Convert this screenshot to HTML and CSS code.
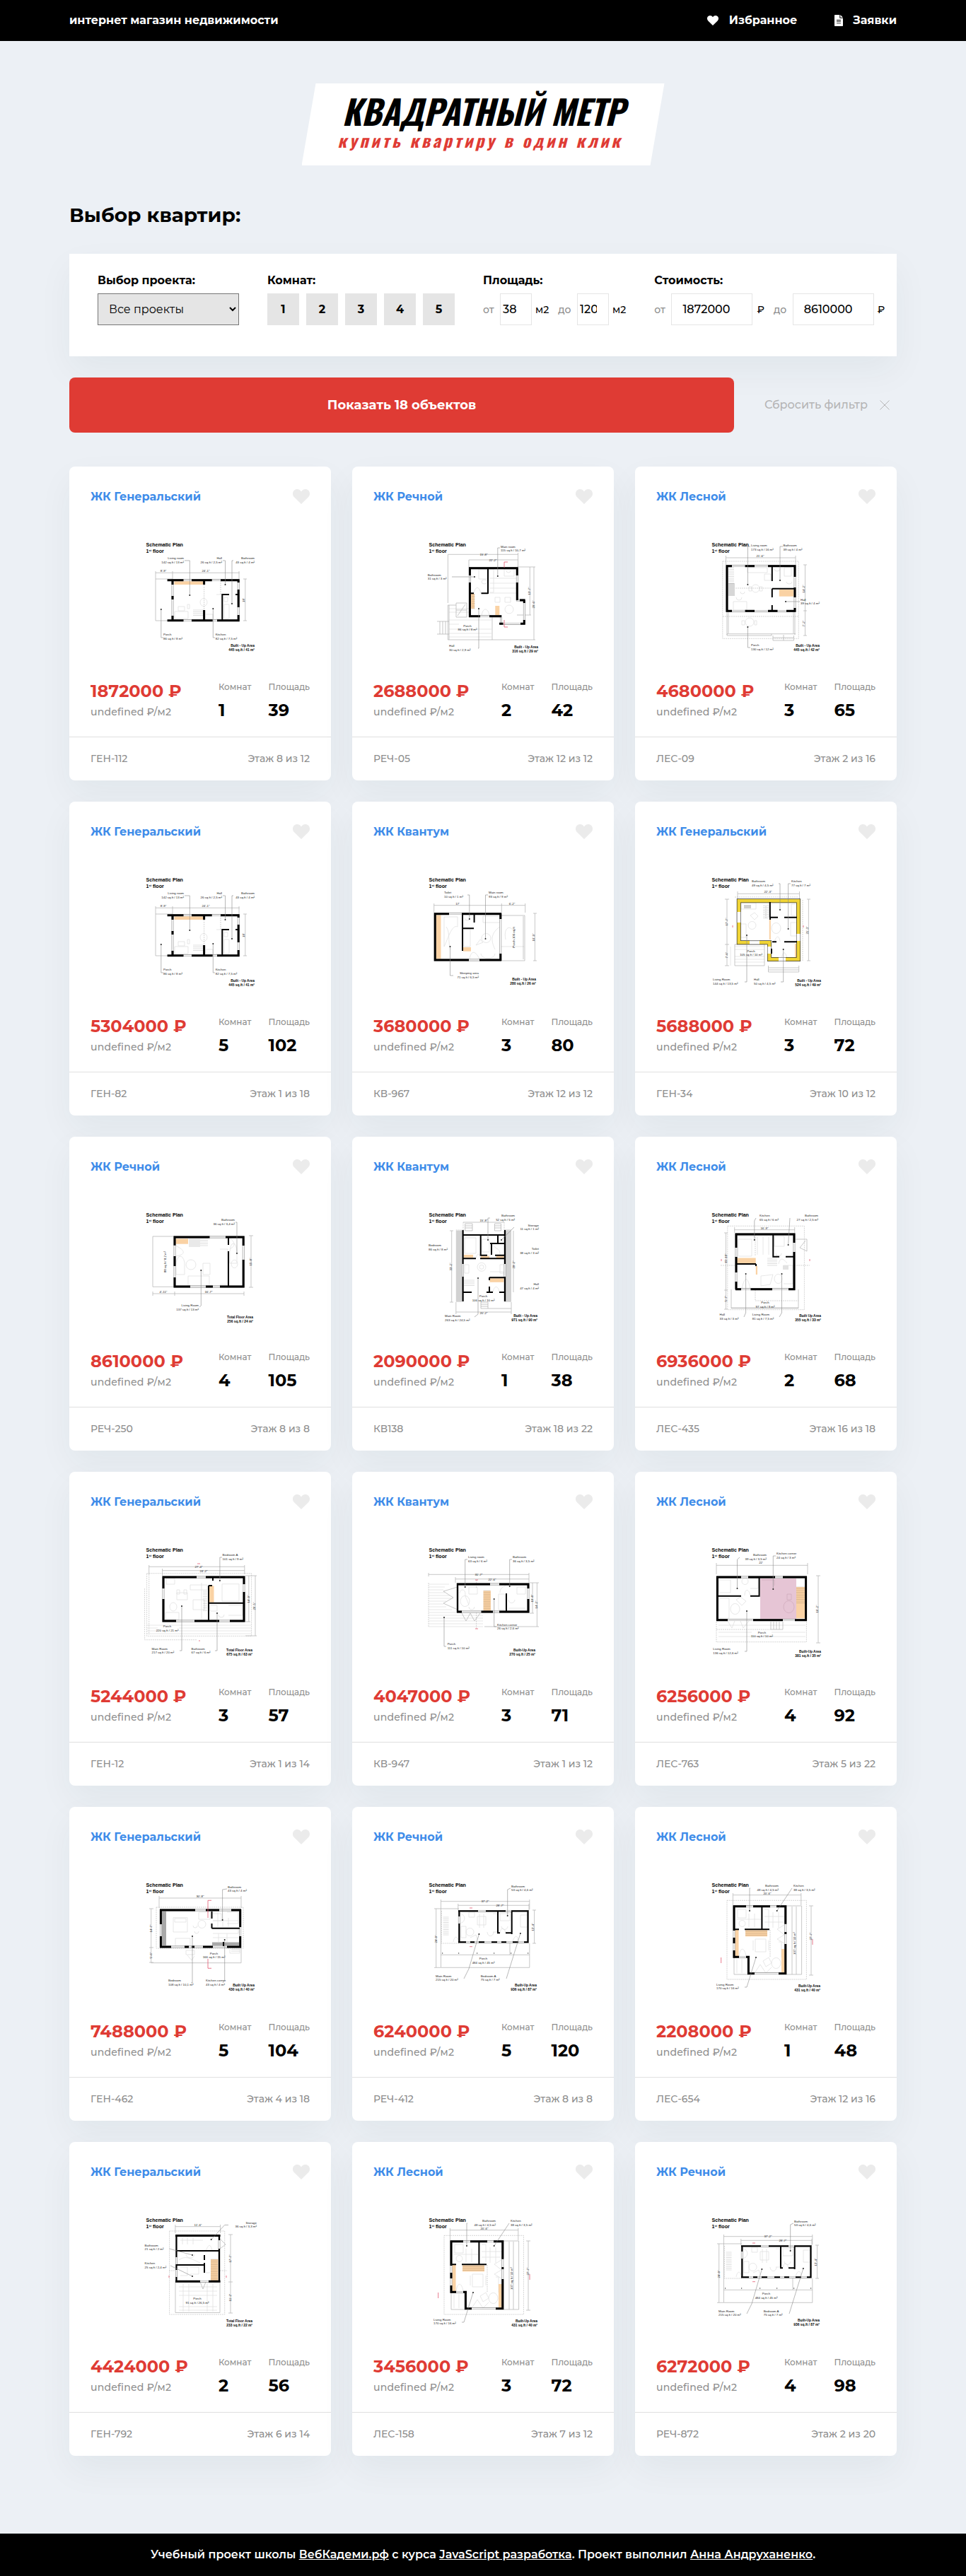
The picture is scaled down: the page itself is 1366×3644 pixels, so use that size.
FILE: index.html
```html
<!DOCTYPE html>
<html lang="ru">
<head>
<meta charset="utf-8">
<title>Квадратный метр</title>
<link rel="stylesheet" href="styles.css">
</head>
<body>
<header class="topbar">
  <div class="container topbar__row">
    <span>интернет магазин недвижимости</span>
    <nav class="topbar__nav">
      <a class="topbar__link" href="#">
        <svg class="topbar__heart" viewBox="0 0 24 21"><path d="M12 21 2 11.3C-1 8 -.4 3.4 2.2 1.4 5.400-1 9.700-.2 12 3.400 14.300-.2 18.600-1 21.800 1.400 24.400 3.400 25 8 22 11.300Z"/></svg>
        Избранное
      </a>
      <a class="topbar__link" href="#">
        <svg class="topbar__doc" viewBox="0 0 12 16"><path fill-rule="evenodd" d="M.8 0H7.300V4.700H12V15.200a.8.8 0 0 1-.8.8H.8A.8.8 0 0 1 0 15.200V.8A.8.8 0 0 1 .8 0ZM8.300 0 12 3.800H8.300ZM3 7v.9h6V7ZM3 9.200v.9h6v-.9ZM3 11.400v.9h6v-.9Z"/></svg>
        Заявки
      </a>
    </nav>
  </div>
</header>

<main class="container">
  <div class="logo">
    <div class="logo__title">КВАДРАТНЫЙ МЕТР</div>
    <div class="logo__sub">купить квартиру в один клик</div>
  </div>

  <h1 class="heading">Выбор квартир:</h1>

  <form class="filter">
    <div class="filter__group filter__group--project">
      <div class="filter__label">Выбор проекта:</div>
      <select class="filter__select"><option>Все проекты</option></select>
    </div>
    <div class="filter__group">
      <div class="filter__label">Комнат:</div>
      <div class="rooms"><span class="rooms__item">1</span><span class="rooms__item">2</span><span class="rooms__item">3</span><span class="rooms__item">4</span><span class="rooms__item">5</span></div>
    </div>
    <div class="filter__group">
      <div class="filter__label">Площадь:</div>
      <div class="range">
        <span class="range__word">от</span><span class="range__box"><span class="range__value">38</span></span><span class="range__unit">м2</span>
        <span class="range__word">до</span><span class="range__box"><span class="range__value">120</span></span><span class="range__unit range__unit--last">м2</span>
      </div>
    </div>
    <div class="filter__group">
      <div class="filter__label">Стоимость:</div>
      <div class="range">
        <span class="range__word">от</span><span class="range__box range__box--wide">1872000</span><span class="range__unit range__unit--money">₽</span>
        <span class="range__word">до</span><span class="range__box range__box--wide">8610000</span><span class="range__unit range__unit--last">₽</span>
      </div>
    </div>
  </form>

  <div class="actions">
    <button class="actions__show" type="button">Показать 18 объектов</button>
    <a class="actions__reset" href="#">Сбросить фильтр
      <svg class="actions__cross" viewBox="0 0 14 14"><path d="M.5.5l13 13M13.500.5l-13 13"/></svg>
    </a>
  </div>

  <section class="cards" id="cards"></section>
</main>

<footer class="footer">Учебный проект школы&nbsp;<a href="#">ВебКадеми.рф</a>&nbsp;с курса&nbsp;<a href="#">JavaScript разработка</a>. Проект выполнил&nbsp;<a href="#">Анна Андруханенко</a>.</footer>

<script src="script.js"></script>
</body>
</html>
```
FILE: styles.css
```css
* { box-sizing: border-box; }

body {
  margin: 0;
  background: #ecf0f5;
  color: #000;
  font: 500 16px/20px Montserrat, "Open Sans", sans-serif;
}

a { color: inherit; }

.container { width: 1170px; margin: 0 auto; }

.topbar { background: #000; color: #fff; font-weight: 700; }
.topbar__row { display: flex; justify-content: space-between; align-items: center; height: 58px; }
.topbar__nav { display: flex; gap: 53px; }
.topbar__link { display: flex; align-items: center; text-decoration: none; }
.topbar svg { fill: #fff; }
.topbar__heart { width: 16px; height: 14px; margin-right: 15px; }
.topbar__doc { width: 12px; height: 16px; margin-right: 14px; }

.logo {
  width: 513px;
  height: 116px;
  margin: 60px auto 53px;
  padding: 15px 0 0 57px;
  background: #fff;
  clip-path: polygon(20px 0, 100% 0, 493px 100%, 0 100%);
  font-family: Oswald, "Roboto Condensed", sans-serif;
  font-style: italic;
  font-weight: 700;
  white-space: nowrap;
}
.logo__title { font-size: 48px; line-height: 48px; }
.logo__sub { margin: 5px 0 0 -6px; color: #df3b34; font-size: 24px; line-height: 24px; letter-spacing: 3.840px; }

.heading { margin: 0 0 38px; font-size: 28px; line-height: 34px; font-weight: 700; }

.filter {
  display: flex;
  gap: 40px;
  height: 145px;
  padding: 28px 0 0 40px;
  background: #fff;
  box-shadow: 0 20px 50px rgba(0, 60, 50, .05);
}
.filter__group--project { width: 200px; }
.filter__label { margin-bottom: 8px; font-weight: 700; }
.filter__select {
  width: 200px;
  height: 45px;
  padding: 0 0 0 11px;
  border: 1px solid #767676;
  border-radius: 0;
  background-color: #e5e5e5;
  color: #000;
  font: 400 16px Montserrat, "Open Sans", sans-serif;
}

.rooms { display: flex; gap: 10px; }
.rooms__item { width: 45px; background: #e5e5e5; font-weight: 700; line-height: 45px; text-align: center; }

.range { display: flex; align-items: center; height: 45px; font-size: 14px; }
.range__word { margin-right: 8.500px; color: #8e8e8e; }
.range__unit { margin: 0 13px 0 5px; }
.range__unit--money { margin-left: 6px; }
.range__unit--last { margin-right: 0; }
.range__box { width: 45px; height: 45px; padding-left: 3px; border: 1px solid #e5e5e5; font-size: 16px; line-height: 43px; }
.range__value { display: block; width: 24px; overflow: hidden; }
.range__box--wide { width: 115px; padding-left: 15px; }

.actions { display: flex; align-items: center; margin: 30px 0 48px; }
.actions__show {
  width: 940px;
  height: 78px;
  padding: 0;
  border: 0;
  border-radius: 8px;
  background: #df3b34;
  color: #fff;
  font: 700 18px Montserrat, "Open Sans", sans-serif;
}
.actions__reset { display: flex; align-items: center; gap: 17px; margin-left: 43px; color: #b5b5b5; text-decoration: none; white-space: nowrap; }
.actions__cross { width: 14px; height: 14px; stroke: #b5b5b5; fill: none; }

.cards { display: grid; grid-template-columns: repeat(3, 370px); gap: 30px; }

.card {
  height: 444px;
  padding-top: 30px;
  border-radius: 8px;
  background: #fff;
  box-shadow: 0 20px 50px rgba(0, 60, 50, .05);
}
.card__header { display: flex; justify-content: space-between; align-items: center; height: 24px; padding: 0 30px; }
.card__title { padding-top: 2px; color: #3e8ce9; font-weight: 700; }
.card__heart { width: 24px; height: 21px; fill: #ebebeb; }
.card__plan { display: block; width: 160px; height: 160px; margin: 51px auto 37px; overflow: visible; }
.card__info { display: flex; height: 80px; padding: 0 30px; }
.card__price { padding-top: 1px; color: #df3b34; font-size: 24px; font-weight: 700; line-height: 30px; }
.card__rate { margin-top: 4px; color: #8e8e8e; font-size: 14px; letter-spacing: .2px; }
.card__stats { display: flex; gap: 24px; margin: 2px 0 0 auto; }
.card__stat { color: #8e8e8e; font-size: 12px; line-height: 16px; }
.card__number { margin-top: 10px; color: #000; font-size: 24px; font-weight: 700; line-height: 30px; }
.card__footer { display: flex; justify-content: space-between; align-items: center; height: 62px; padding: 0 30px 2px; border-top: 1px solid #e0e0e0; color: #8e8e8e; font-size: 14px; }

.plan { font-family: "Liberation Sans", Arial, sans-serif; fill: none; }
.plan text { fill: #222; font-size: 4.400px; }
.plan .plan__title { fill: #000; font-size: 7.100px; font-weight: 700; }
.plan .plan__total { fill: #000; font-size: 4.900px; font-weight: 700; }
.plan__base { stroke: #8a8a8a; stroke-width: 2.800px; }
.plan__glass { stroke: #fff; stroke-width: 1.600px; }
.plan__wall { stroke: #000; stroke-width: 3px; }
.plan__inner { stroke: #000; stroke-width: 2px; }
.plan__thin { stroke: #b0b0b0; stroke-width: .7px; }
.plan__dash { stroke: #bbb; stroke-width: .6px; stroke-dasharray: 2 1; }
.plan__furniture { stroke: #dcdcdc; stroke-width: .7px; }
.plan__lead { stroke: #888; stroke-width: .6px; }
.plan__red { stroke: #e2566e; stroke-width: .8px; }
.plan__dot { fill: #222; }

.footer { display: flex; justify-content: center; align-items: center; height: 60px; margin-top: 110px; background: #000; color: #fff; font-weight: 600; white-space: pre; }
```
FILE: script.js
```js
// Floor plans, drawn on a 160 x 160 canvas.
// base: wall outline; wall: solid outer walls; inner: partitions; thin: dimension lines;
// furn: furniture; fill: [x, y, w, h, colour]; notes: [x, y, anchor, line 1, line 2, lead path]
const O = '#fad2a4';
const PLANS = {
  veranda: {
    base: 'M41 55.7H134.200V112.700H41Z',
    wall: 'M33.600 55.700H56.500M68 55.700H96.700M109 55.700H135.700M33.600 112.700H56.500M68 112.700H97.700M104 112.700H135.700M41 56V62M41 78V83M41 106V112M85.600 56V62M85.600 98V112M134.200 69V94M134.200 105V112M134.200 56V59',
    inner: 'M111.300 112V76H121M130 76H134',
    thin: 'M17 54H41M17 54V113H41M17 45.300H135.700M17 43V54M41 43V54M135 43V54M143.800 54V113M141 54H146M141 113H146',
    dash: 'M85.600 62V98M109 56V76',
    furn: 'M80 87a5 5.500 0 1 0 10 0a5 5.500 0 1 0-10 0M44 100H63V110H44ZM49 93H58V99H49ZM62 90H65V96H62ZM103 76H110V110H103M114 90H121V110H114ZM114 80H119V86H114ZM88 104H98V110H88',
    stairs: [70, 98, 15, 9],
    fill: [[43.500, 57.300, 41.500, 4.700, O]],
    notes: [[57, 26, 'e', 'Living room', '142 sq.ft / 13 m²', 'M58 28H65.300V77'], [111, 26, 'e', 'Hall', '26 sq.ft / 2,5 m²', 'M112 28H115.500V62'], [157, 26, 'e', 'Bathroom', '43 sq.ft / 4 m²', 'M127 28H125V89'], [28, 134, 's', 'Porch', '86 sq.ft / 8 m²', 'M28 137H24.800V97'], [101.700, 134, 's', 'Kitchen', '82 sq.ft / 7,5 m²', 'M101 137H98.300V96']],
    dims: [[28, 44, '8\'-9"'], [88, 44, '24\'-1"'], [143, 84, '18\'', 1]],
    total: [157, 149.500, 'Built - Up Area', '445 sq.ft / 41 m²']
  },
  bay: {
    base: 'M61.400 38.700H128.300V84H138.300V117.300H105.400V106.700H61.400Z',
    wall: 'M60 38.700H129.500M61.400 38V49M61.400 59V108M60 106.700H76M89 106.700H106M128.300 38V49M128.300 59V84M132 84H139.500M138.300 84V88M138.300 112V118.500M133 117.300H139.500M103 117.300H108.500',
    inner: 'M87 39V75M61 74.300H67M77.500 74.300H87',
    thin: 'M30.400 19.300H129.500M30.400 19.300V88M60 27H129.500M60 27V38M129.500 17V38M146.300 37V105M152 37V140M128 37H154M128 105H148M93 140H154M30.400 91V140H93V108M30.400 91H42M42 88H57V108H42ZM42 98H57M15 114H32M15 132H32M19 114V132M23 114V132M27 114V132M32 140V91M44 106L55 90',
    furn: 'M74 40H86V54H74ZM78 58a4 3 0 1 0 8 0a4 3 0 1 0-8 0M88 40H95V73H88M110 40H124V50H110ZM113 42a3 3 0 1 0 6 0M111 97a6 6 0 1 0 12 0a6 6 0 1 0-12 0M97 80H104V87H97ZM111 80H119V87H111ZM67 74C70 62 75 66 77 74M78 106C80 92 88 96 89 106M90 53H127M90 60H127M90 67H127M90 74H127M32 96H60M32 101H60M32 112H92M32 118H46M32 125H92M32 131H92M32 136H92',
    stairs: [64, 76, 5, 20],
    fill: [[63, 75, 5, 21, O], [97.300, 92, 6, 14, O]],
    notes: [[1.700, 49.500, 's', 'Bathroom', '31 sq.ft / 3 m²', 'M36 51H68'], [105, 9.500, 's', 'Main room', '115 sq.ft / 10,7 m²', 'M104 10H100.800V50'], [58, 121.500, 'm', 'Porch', '86 sq.ft / 8 m²'], [32, 150, 's', 'Hall', '30 sq.ft / 2,9 m²', 'M73 152H74V96']],
    dims: [[81, 20.500, '15\'-8"'], [94, 28.500, '22\'-2"'], [147, 71, '13\'-7"', 1], [153, 90, '20\'-6"', 1]],
    mark: 'M110 38V30H115M110 112V122H115',
    total: [158, 151.500, 'Built - Up Area', '316 sq.ft / 29 m²']
  },
  square: {
    base: 'M25 35.700H121V99.300H25Z',
    wall: 'M25 35.700H32M50.600 35.700H64M83 35.700H122.500M25 34.200V100.800M25 99.300H32M50.600 99.300H64M83 99.300H96.500M109 99.300H122.500M121 35V51M121 66V80M121 95V100',
    inner: 'M88.800 36V57M88.800 67.700V80M88.800 91V99M88.800 67.700H121',
    thin: 'M23.500 24H122M23.500 21V34M122 21V34M25 100V133M27 100V131M119 100V131M121 100V133M25 131.700H88V134H25ZM88 131.700H122M90 134V141H119.500V134M90 137H119.500M105 133V141M135.500 34V134M133 34H138M133 99H138M133 134H138',
    dash: 'M18.800 29H126.300V138.300H18.800ZM19 107H126M37 67H88',
    furn: 'M60 67.500a5.500 5.500 0 1 0 11 0a5.500 5.500 0 1 0-11 0M56 65H60V71H56ZM71 65H75V71H71ZM51 115a6 6 0 1 0 12 0a6 6 0 1 0-12 0M46 113H50V119H46ZM64 113H67V119H64ZM34 86H53V98H34ZM38 80a4 4 0 1 0 8 0M44 72a3 3 0 1 0 6 0M54 38H82V45H54ZM78 47H87V56H78ZM106 38H116V50H106ZM92 40a4 3 0 1 0 8 0M109 58a4 3 0 1 0 8 0',
    stairs: [27, 38, 8, 24],
    fill: [[27, 60, 9, 18, '#d7d7d7'], [98.800, 69, 20.500, 9.700, O]],
    notes: [[59, 8, 's', 'Living room', '173 sq.ft / 16 m²', 'M58 8H54.400V62'], [104.500, 8, 's', 'Bathroom', '39 sq.ft / 4 m²', 'M104 8H100V56'], [129, 84.500, 's', 'Hall', '39 sq.ft / 4 m²', 'M128 86H108'], [59, 149, 's', 'Porch', '130 sq.ft / 12 m²', 'M58 151H54.400V122']],
    dims: [[72, 23, '21\'-6"'], [135, 68, '14\'-2"', 1], [135, 117, '7\'-2"', 1]],
    total: [156, 150, 'Built - Up Area', '445 sq.ft / 42 m²']
  },
  studio: {
    base: 'M12.200 53.700H104.800V119H12.200Z',
    wall: 'M12.200 52.200V120.500M12 53.700H32M50 53.700H106M12 119H60M75 119H106M104.800 53V61M104.800 110V120',
    inner: 'M51 54V106M51 74.300H67M67.600 54V66',
    thin: 'M10.700 41.700H139.700M10.700 39V52M106.300 39V52M139.700 39V52M106 56H139V120H106M137 57V118M153.400 53V120M151 53H156M151 120H156',
    furn: 'M25 58H44V72C36 68 30 90 25 100ZM28 72C34 80 30 94 34 104M80 57H104V66H80ZM78 88a6 6 0 1 0 13 0a6 6 0 1 0-13 0M70 98L76 90L80 94ZM77 110a9 6 0 1 0 20 0M53 75H62V100H53ZM54 60a4 3 0 1 0 8 0M61 118C63 104 70 106 75 118M97 104C90 90 92 80 104 72M112 90C108 70 122 68 125 84M106 100H138',
    fill: [[14, 55.500, 6.500, 62, O], [51.700, 101, 11.300, 5.700, O]],
    notes: [[25, 25, 's', 'Toilet', '10 sq.ft / 1 m²', 'M58 27H60.800V61'], [88, 25, 's', 'Main room', '93 sq.ft / 9 m²', 'M87 27H83.500V89'], [74, 139, 'e', 'Sleeping area', '71 sq.ft / 6,5 m²', 'M38 141H33.500V100'], ],
    dims: [[44, 40.500, '17\''], [121, 40.500, '6\'-2"'], [153, 87, '16\'-9"', 1], [125, 87, 'Porch 100 sq.ft', 1]],
    total: [155, 148, 'Built - Up Area', '280 sq.ft / 26 m²']
  },
  yellow: {
    base: 'M41.800 35.300H126V118H85V94.300H41.800Z',
    edge: 'M41.800 35.300H126V118H85V94.300H41.800Z',
    wall: '',
    inner: 'M85.800 37V59M85.800 58.700H97M106 58.700H124M89 93.300H95M106 93.300H124M86 59V62M88 103V110',
    thin: 'M40.200 25.300H127.500M40 22V34M127.500 22V34M140.400 33V120M138 33H143M138 120H143M25 33V127M22 33H28M22 97H28M22 127H28M36 97H78V127H36ZM83.500 127V136H126.700V127M83.500 130H126.700M83.500 133H126.700',
    dash: 'M80 43V60M132 120V33M36 30H126',
    furn: 'M45 38H66V47H45ZM44 68H52V87H44ZM55 70a5 5 0 1 0 11 0a5 5 0 1 0-11 0M58 56L64 52L69 57L64 62ZM88 74a6 7 0 1 0 13 0a6 7 0 1 0-13 0M115 66H124V85H115ZM116 40H124V56H116ZM92 93C95 84 99 84 100 93M102 120C103 105 108 106 110 117M36 100H78M36 104H78M36 114H78M36 118H78M36 122H78M30 100V127',
    stairs: [76, 42, 8, 18],
    fill: [[49, 41, 10, 5, '#cfcfcf'], [84.800, 62, 2, 28, O], [121, 96, 3, 19, O]],
    notes: [[60, 9, 's', 'Bathroom', '49 sq.ft / 4,5 m²', 'M98 11H100V48'], [116, 9, 's', 'Kitchen', '77 sq.ft / 7 m²', 'M115 11H111.600V75'], [59, 107.500, 'm', 'Porch', '105 sq.ft / 10 m²'], [5, 148, 's', 'Living Room', '144 sq.ft / 13,5 m²', 'M50 150H53V84'], [63, 148, 's', 'Hall', '50 sq.ft / 4,5 m²', 'M101 150H104.700V104']],
    dims: [[83, 24, '22\'-3"'], [26, 65, '17\'-7"', 1], [26, 112, '7\'-6"', 1], [140, 77, '21\'-3"', 1]],
    mark: 'M33 70V73M133 70V73',
    total: [158, 150, 'Built - Up Area', '524 sq.ft / 49 m²']
  },
  terrace: {
    base: 'M44 37H141.200V107H44Z',
    wall: 'M42.500 37H93.500M116 37H142.700M44 36V48.700M44 64V78M44 94V107M42.500 107H66M88 107H98M108 107H142.700M141.200 36V49M141.200 69V108',
    inner: 'M120 38V48M120 57V106',
    thin: 'M13 36H44M13 36V107.300H44M13 117H142M13 114V120M44 114V120M142 114V120M152 35V108M149 35H155M149 108H155',
    furn: 'M45 49C60 56 60 62 45 64M46 83a6 13 0 0 1 12-10V90H46ZM60 76a7 7 0 1 0 14 0a7 7 0 1 0-14 0M84 74H94V90H84ZM63 92H93V106H63ZM108 54H119V104H108M122 38C128 44 132 48 122 54M122 58a5 12 0 0 1 10 0V74H122ZM124 75a4 5 0 1 0 9 0a4 5 0 1 0-9 0',
    stairs: [80, 39, 11, 12],
    fill: [[45, 39.300, 18, 7.400, O], [64, 39, 16, 12, '#e9e9e9']],
    notes: [[129, 14, 'e', 'Bathroom', '36 sq.ft / 3,4 m²', 'M130 16H132V60'], [78, 135, 'e', 'Living Room', '137 sq.ft / 13 m²', 'M79 136L81.300 134V84']],
    dims: [[28, 116, '4\'-11"'], [92, 116, '16\'-7"'], [153, 72, '15\'-8"', 1], [32, 72, '88 sq.ft / 8,2 m²', 1]],
    total: [155, 152, 'Total Floor Area', '256 sq.ft / 24 m²']
  },
  tall: {
    base: 'M51.600 28V128M111 28V128',
    wall: '',
    inner: 'M51.600 27V75M51.600 93V128M111 27V75M111 93V128M51 34H111M51 67.300H70M76 67.300H111M76.700 34V62.700H86M97 62.700H111M92 46V62M90 46H111M101 34V46M51 115H64M85 115H94M103 115H111M89 94.300H111M89 94V98M89 107V115',
    thin: 'M41.800 143H120M41.800 140V146M120 140V146M35.700 28V129M33 28H38M33 129H38M123 28V115M41.800 129V140M120 129V140M52 16H110M54.700 18H65V28H54.700ZM96.500 18H105.500V28H96.500ZM54.700 21H65M54.700 24H65M96.500 21H105.500M96.500 24H105.500M77 129H87V138H77ZM77 132H87M77 135H87M111 27H120M87 138H120',
    dash: 'M41.800 27H50M52 16V27M110 16V27',
    furn: 'M54 38H70V60H54ZM54 76H60V88H54ZM104 76H110V88H104ZM72 79.300a6 6 0 1 0 12 0a6 6 0 1 0-12 0M75 79.300a3 3 0 1 0 6 0a3 3 0 1 0-6 0M90 86H109V93H90M79 40H89V58H79ZM94 48C100 56 104 52 104 62M70 67C72 58 76 60 76 67M94 115C96 104 102 106 103 115',
    stairs: [53, 98, 15, 8],
    fill: [[41.800, 27.700, 8, 101, '#d2d2d2'], [112, 27.700, 8, 101, '#d2d2d2'], [52.500, 62, 13.500, 4, O], [77, 63.500, 12, 3.500, O], [98.700, 63.500, 11, 3.500, O], [89.500, 95.300, 20, 5.500, O]],
    notes: [[125, 8, 'e', 'Bathroom', '52 sq.ft / 5 m²', 'M90 10H87V41'], [159, 21.500, 'e', 'Storage', '11 sq.ft / 1 m²', 'M124 23L106 41'], [3, 50, 's', 'Bedroom', '86 sq.ft / 8 m²'], [159, 55, 'e', 'Toilet', '38 sq.ft / 3 m²'], [159, 105, 'e', 'Hall', '47 sq.ft / 4 m²'], [80.500, 122, 'm', 'Porch', '106 sq.ft / 10 m²'], [26, 150, 's', 'Main Room', '263 sq.ft / 24,5 m²', 'M68 150L73 146V95']],
    dims: [[81, 15, '15\'-8"'], [81, 146, '20\'-2"'], [36, 79, '33\'-2"', 1], [125, 76, '29\'-2"', 1]],
    total: [157, 149.500, 'Built - Up Area', '971 sq.ft / 90 m²']
  },
  cottage: {
    base: 'M38 33H120V110.700H38Z',
    wall: 'M36.500 33H121.500M38 33V52M38 65V87M38 100V110.700M37 110.700H45M58.500 110.700H89M112 110.700H121.500M120 33V45M120 58V112',
    inner: 'M38 75H66M90.300 34V64.700H99M108 64.700H120M66 75V78',
    thin: 'M35.700 26.700H120.700M35.700 23V31M120.700 23V31M23.500 31V139M21 31H26M21 112H26M21 139H26M31 111V137.700H126V111M122 40H138V57L128 52L136 42M31 137H126',
    dash: 'M25.800 21.300H134.400V139.700H25.800ZM65 34V64M65 112V127H126M16 77H38M120 77H142',
    furn: 'M41 40H60V64H41ZM40 36H64M92 36H106V50H92ZM94 60a4 4 0 1 0 8 0M110 74C104 66 100 66 98 75M105 77H118V103H105M73 92L90 90L86 104L73 106ZM92 96a5 6 0 1 0 11 0a5 6 0 1 0-11 0M46 110C50 92 54 92 58 110M68 36V62M76 36V62M84 36V62',
    stairs: [82, 67, 14, 10],
    fill: [[38.700, 66.500, 27, 7.500, O], [65.800, 78, 2.200, 12, O], [104, 77, 8, 6, '#e2e2e2']],
    notes: [[71, 8, 's', 'Kitchen', '65 sq.ft / 6 m²', 'M66 10L63.800 14V41'], [154, 8, 'e', 'Bathroom', '27 sq.ft / 2,5 m²', 'M114 10L111.600 48'], [79, 131, 'm', 'Porch', '97 sq.ft / 9 m²'], [14.500, 148, 's', 'Hall', '33 sq.ft / 3 m²', 'M49 150L51.600 144V89'], [60.700, 148, 's', 'Living Room', '81 sq.ft / 7,5 m²', 'M99 150L102.500 144V89']],
    dims: [[78, 25.500, '16\'-9"'], [25, 67, '15\'-10"', 1], [25, 124, '5\'-7"', 1]],
    mark: 'M17 68V71M142 68V71',
    total: [158, 150, 'Built Up Area', '355 sq.ft / 33 m²']
  },
  family: {
    base: 'M28 44H142V106H28Z',
    wall: 'M26.500 44H75M88 44H143.500M28 43V60M28 75V107M26.500 106H46M72 106H107M122 106H143.500M142 43V54M142 65V107',
    inner: 'M92 56V106M92 80.700H142M98 44V49M92 56H97',
    thin: 'M7.700 29.300H142.800M7.700 27V40M142.800 27V40M26.600 34.700H142.800M26.600 32V42M148.800 42V107M158 42V127M144 42H160M144 107H151M144 127H160',
    dash: 'M4.600 38.700H152.600V127.300H4.600ZM7.700 40V125M1.600 60V132.700H75',
    furn: 'M111 53.700H135V78H111ZM47 62H51V68H47ZM57 62H61V68H57ZM47 66H62V76H47ZM66 55H90V62H66ZM70 76H86V90H70ZM82 52V104M37 86a5 6 0 1 0 10 0a5 6 0 1 0-10 0M31 94H50V104H31ZM32 46H44V54H32ZM94 84H104V92H94ZM106 97a4 4 0 1 0 8 0M120 84H140V98H120M4.600 112H152M4.600 116H20M50 116H152M4.600 120H20M50 120H152M4.600 124H152',
    stairs: [84, 64, 6, 28],
    fill: [[93, 56.300, 6.500, 23.400, O]],
    notes: [[111.600, 14, 's', 'Bedroom A', '101 sq.ft / 9 m²', 'M111 16H107.900V49'], [33.500, 115, 'm', 'Porch', '220 sq.ft / 21 m²'], [11.500, 146.500, 's', 'Main Room', '217 sq.ft / 20 m²', 'M51 148H54V85'], [67.600, 146.500, 's', 'Bathroom', '67 sq.ft / 6 m²', 'M101 148H104V95']],
    dims: [[78, 31, '27\'-4"'], [85, 36.500, '24\'-2"'], [150, 75, '14\'-9"', 1], [158, 85, '20\'-5"', 1]],
    mark: 'M76 25H80M78 134H80',
    total: [154, 149, 'Total Floor Area', '675 sq.ft / 63 m²']
  },
  compact: {
    base: 'M44 54H144V93H44Z',
    wall: 'M43 54H90M103 54H145.500M43 93H50M77.500 93H94M103 93H145.500M144 53V60M144 75V94',
    inner: 'M44 53V94M113 67V93',
    thin: 'M3 40.300H145M3 38V43M145 38V52M41 46.700H145M41 44V52M150 52V95M156.400 52V114M146 52H159M146 95H152M82 114H159M44 58L24 64L38 73L24 81L44 90M50 95L56 106L62 95L68 106L76 95',
    dash: 'M70.600 48V60M70.600 94V117M3 52V114',
    furn: 'M3 54H32M3 58H26M3 62H24M3 66H26M3 70H33M3 74H35M3 78H28M3 82H24M3 86H28M3 90H36M3 94H42M3 98H80M3 102H80M3 106H80M3 110H80M3 114H80M47 67a4 5 0 0 1 8 0C54 72 58 76 60 84M48 78a6 7 0 1 0 13 0a6 7 0 1 0-13 0M60 86a4 4 0 1 0 8 0M60 58H72V68H60ZM102 68H111V90H102ZM116 76a4 4 0 1 0 9 0M128 58H140V68H128ZM104 66C104 58 110 58 112 56M116 88H140',
    stairs: [80.500, 63.300, 10, 28],
    fill: [[80.500, 63.300, 10.500, 28.700, O]],
    notes: [[59, 17, 's', 'Living room', '63 sq.ft / 6 m²', 'M58 19H54.700V58'], [122, 17, 's', 'Bathroom', '36 sq.ft / 3,5 m²', 'M121 19H117.700V57'], [100, 112.500, 's', 'Kitchen corner', '26 sq.ft / 2,6 m²', 'M99 114H95.700V75'], [29.700, 140, 's', 'Porch', '111 sq.ft / 10 m²', 'M28 142H25V101']],
    dims: [[74, 41.500, '31\'-7"'], [93, 48.500, '22\'-6"'], [151, 74, '10\'-8"', 1], [157, 83, '14\'-2"', 1]],
    mark: 'M69 48H73M69 117H73',
    total: [154, 149, 'Built-Up Area', '270 sq.ft / 25 m²']
  },
  pink: {
    base: 'M11.400 44H136.600V104.700H11.400Z',
    wall: 'M11.400 42.500V106.200M10 44H45M55 44H93M104 44H138M10 104.700H26M62 104.700H104M121 104.700H138M136.600 43V106',
    inner: 'M70.600 45V70.700H58M45 70.700H11M70.600 45V60',
    thin: 'M10 27.300H139M10 24V40M139 24V40M154 42V137M151 42H157M151 137H157M87 107V118H104V107M91 107V118M95 107V118M99 107V118',
    dash: 'M10 107V135.700H137.400V107M10 118H87',
    furn: 'M14 48H30V66H14ZM46 50a4 4 0 1 0 9 0a4 4 0 1 0-9 0M58 46H69V60H58M30 89a6 7 0 1 0 13 0a6 7 0 1 0-13 0M38 76L44 72L52 78L46 84ZM26 106L32 116L36 106M44 106L48 116L56 106M14 74H28V102H14M50 70C50 60 56 60 58 70M76 52H88V62H76M13 112H136M13 122H60M88 122H136M13 128H136',
    over: 'M105 86a7 8 0 1 0 15 0a7 8 0 1 0-15 0M74 48H92V56M110 68H116V76H110Z',
    stairs: [123, 58, 12, 24],
    fill: [[72, 46, 51, 57, '#e6c5d5'], [123, 58, 12, 44.300, O]],
    notes: [[81, 14, 'e', 'Bathroom', '39 sq.ft / 3,5 m²', 'M43 16L39.500 19V60'], [95, 12, 's', 'Kitchen corner', '24 sq.ft / 3 m²', 'M94 14H90.300V61'], [74.400, 123.500, 'm', 'Porch', '110 sq.ft / 10 m²'], [5.300, 147, 's', 'Living Room', '136 sq.ft / 12,6 m²', 'M50 149H53V92']],
    dims: [[73, 25, '22\''], [154, 89, '16\'-2"', 1]],
    total: [158, 151, 'Built-Up Area', '381 sq.ft / 35 m²']
  },
  long: {
    base: 'M24.400 41H136.700V93H24.400Z',
    wall: 'M23 41H73M88 41H107M124 41H138M23 93H39M58 93H64M68 93H72M84 93H98M118 93H138M24.400 40V61M24.400 78V94M136.700 40V65M136.700 78V94',
    inner: 'M96.500 43V53M96.500 60V66.700M96.500 66.700H136M113 86V92',
    thin: 'M22 24H138M22 21V38M138 21V38M10.700 39V115.700M8 39H14M8 94H14M8 115H14M10.700 115.700H138V94',
    dash: 'M18 37H141V95M18 37V95H141',
    furn: 'M42 51.700H62V72H42ZM44 53H60V58H44ZM70 63a3 3 0 1 0 6 0M77 61a5 5 0 1 0 11 0a5 5 0 1 0-11 0M72 71a3 3 0 1 0 6 0M78 44H94V54H78ZM45 81H66V92H45ZM98 46H110V56H98M118 44H134V60H118M98 56H134M105 44V65M112 52V65M120 52V65M98 74H134V68M98 80H134M106 74V86M118 74V86M60 98H72V104H60ZM62 105L68 112L72 106M122 96V102H136V96',
    stairs: [124, 94, 12, 7],
    fill: [[26, 43, 6, 48, '#a9a9a9'], [97, 86.500, 38, 4.500, '#a9a9a9']],
    notes: [[119, 9.500, 's', 'Bathroom', '43 sq.ft / 4 m²', 'M118 11L111.600 12V55'], [99.500, 103.500, 'm', 'Porch', '166 sq.ft / 15 m²'], [35, 142, 's', 'Bedroom', '108 sq.ft / 10,1 m²', 'M67 144H69V78'], [88, 142, 's', 'Kitchen corner', '43 sq.ft / 4 m²', 'M112 144L114.700 140V83']],
    dims: [[80, 22.500, '30\'-8"'], [12, 67, '14\'-7"', 1], [12, 105, '5\'-6"', 1]],
    mark: 'M91 52V27.300H96M91 110V123.300H96',
    total: [157, 149, 'Built Up Area', '430 sq.ft / 40 m²']
  },
  ranch: {
    base: 'M46.300 42.300H143.500V86.300H46.300Z',
    wall: '',
    inner: 'M45 42.300H73M84 42.300H112M120 42.300H144.500M46.300 42V50M46.300 60V86.300M143.500 42V87M101 43V73.300H104M112 73.300H120M120.700 43V75M45 86.300H56M62 86.300H68M74 86.300H82M92 86.300H100M106 86.300H113M122 86.300H130M138 86.300H144.500',
    thin: 'M20.500 28.700H145.800M20.500 26V40M145.800 26V40M44.800 34.300H145M44.800 32V41M145 32V41M13.700 39V122.300M11 39H46M11 122.300H20M152.600 41V88M150 41H155M150 88H155M20.500 104.300H145.800M20.500 40V122.300H145.800V88M118 88V104',
    dash: 'M21.300 42V88H46',
    furn: 'M48 46C56 48 56 58 47 60M60 44H68V51H60ZM72 50H84V62H72ZM75 46V66M81 46V66M94 46H100V72H94M104 46H118V56H104ZM106 64a4 4 0 1 0 9 0M133 48H143V65H133ZM49 64H56V80H49ZM56 72a5 5 0 1 0 11 0a5 5 0 1 0-11 0M62 80L70 76L72 83M86 72a4 5 0 1 0 9 0M104 73C106 64 110 66 112 73M122 86C124 76 130 76 129 84M38 86C40 76 44 78 46 86',
    stairs: [23.600, 51, 8, 25],
    fill: [],
    notes: [[120, 8.500, 's', 'Bathroom', '53 sq.ft / 4,6 m²', 'M119 10L114.700 12V49'], [80.500, 111, 'm', 'Porch', '484 sq.ft / 45 m²'], [13, 135.500, 's', 'Main Room', '215 sq.ft / 20 m²', 'M53 138L60 124L74.400 75'], [76.700, 135.500, 's', 'Bedroom A', '75 sq.ft / 7 m²', 'M113 138L132.900 74']],
    dims: [[83, 30, '37\'-2"'], [104, 36, '28\'-7"'], [15, 82, '24\'-9"', 1], [152, 65, '13\'-4"', 1]],
    mark: 'M61 38H65M61 92.700H65',
    posts: [22, 45, 71, 95, 119, 143],
    total: [156, 149, 'Built-Up Area', '936 sq.ft / 87 m²']
  },
  chalet: {
    base: 'M35 35.700H107.800V130.700H55.400V107.300H35Z',
    wall: 'M33.500 35.700H52M62 35.700H86M95 35.700H109.300M35 35V70M35 80V88M35 98V108M33.500 107.300H42M52 107.300H57M55.400 106V132M54 130.700H64M98 130.700H109.300M107.800 35V60.700M107.800 72V75M107.800 89V132',
    inner: 'M74.400 36V68.300M50 68.300H85M35 68.300H42',
    thin: 'M33.400 19.700H129.800M33.400 17V34M129.800 17V34M144 35V133M141 35H147M141 133H147M109 35H130.600V132H109M35 108V132H55M117 36V132M123 36V132',
    dash: 'M25 27.300H137.400V139H25ZM86 69V108',
    furn: 'M40 40H52V52H40ZM42 60a4 4 0 1 0 9 0a4 4 0 1 0-9 0M56 46V66M64 46V66M38 54H73M78 40H84V66M90 44V66M98 44V66M78 58H106M78 50H106M65 82H80V100H65ZM62 84V98M84 84V98M76 113L84 108L88 116L80 121ZM88 116a6 7 0 1 0 13 0a6 7 0 1 0-13 0M42 106C44 92 50 94 52 106M106 62L96 68L106 76L96 82L106 88M64 130L72 118L80 130L88 122M39 110V130M46 110V130M98 86H102V108',
    stairs: [51, 69, 31, 9],
    fill: [[36.500, 69, 5, 37, O], [51, 69.300, 31, 9, O], [102, 96, 5, 33, O]],
    notes: [[98, 8, 'e', 'Bathroom', '48 sq.ft / 4,5 m²', 'M58 10H57V42'], [119, 8, 's', 'Kitchen', '38 sq.ft / 3,5 m²', 'M117 10L95.700 42'], [10, 147.500, 's', 'Living Room', '170 sq.ft / 16 m²', 'M50 150H53L66 108']],
    dims: [[82, 18.500, '20\'-6"'], [145, 78, '27\'-7"', 1], [122, 88, '107 sq.ft / 10 m²', 1]],
    mark: 'M16.700 108V116M146 82V90',
    total: [157, 149.500, 'Built-Up Area', '431 sq.ft / 40 m²']
  },
  cabin: {
    base: 'M46.400 27.500H107V92.300H46.400Z',
    wall: 'M45 27.500H108.500M45 92.300H80M92 92.300H108.500',
    inner: 'M46.400 27V58M46.400 68V76M46.400 86V93M107 27V34M107 46V93M46 49H108M46 69H87M86 55V62M86 66V80',
    thin: 'M44.900 14.700H108.600M44.900 12V24M108.600 12V24M123 26V137M120 26H126M120 93H126M120 137H126M45 93V136.500H108V93M108 32L116 40L108 46M80 93L84 103L88 93',
    dash: 'M36.500 21H114.700V139H36.500ZM36 77H46M108 77H118',
    furn: 'M55 30V40M62 28V40M70 30V40M52 34H84M60 54a6 5 0 1 0 12 0M50 62C60 54 70 62 80 66M52 72H62V84H52M66 72H78V82H66M88 49C92 40 94 38 97 48M88 80H94M50 100H104M50 106H104M50 112H104M50 128H104M50 133H104M56 95V135M64 95V135M90 95V135M98 95V135',
    stairs: [95, 61, 10, 30],
    fill: [[95, 61, 10.500, 30, O]],
    notes: [[160, 10.500, 'e', 'Storage', '36 sq.ft / 3,3 m²', 'M120 12.500H114.700L95.700 33'], [1.600, 42.500, 's', 'Bathroom', '21 sq.ft / 2 m²', 'M36.500 46L69 55'], [1.600, 68, 's', 'Kitchen', '25 sq.ft / 2,4 m²', 'M38 70L69 85'], [76, 118, 'm', 'Porch', '91 sq.ft / 26,5 m²']],
    dims: [[77, 13.500, '11\'-6"'], [124, 60, '17\'-7"', 1], [124, 115, '11\'-2"', 1]],
    mark: 'M36 84V87M117 84V87',
    total: [154, 150, 'Total Floor Area', '233 sq.ft / 22 m²']
  }
};

const ANCHOR = { s: 'start', m: 'middle', e: 'end' };
const path = (cls, d) => d ? `<path class="plan__${cls}" d="${d}"/>` : '';

function note([x, y, a, first, second, lead]) {
  let out = `<text x="${x}" y="${y}" text-anchor="${ANCHOR[a]}">${first}</text><text x="${x}" y="${y + 5.500}" text-anchor="${ANCHOR[a]}">${second}</text>`;
  if (lead) {
    let cx = 0, cy = 0;
    lead.match(/[MLVH][^MLVH]*/g).forEach(s => {
      const v = s.slice(1).split(' ').map(Number);
      if (s[0] === 'H') cx = v[0]; else if (s[0] === 'V') cy = v[0]; else [cx, cy] = v;
    });
    out += path('lead', lead) + `<circle class="plan__dot" cx="${cx}" cy="${cy}" r="1"/>`;
  }
  return out;
}

function plan(p) {
  const steps = [];
  if (p.stairs) {
    const [x, y, w, h] = p.stairs;
    for (let i = 0; i <= h; i += 2.500) steps.push(`M${x} ${y + i}h${w}`);
  }
  const baseEdge = p.edge
    ? `<path d="${p.edge}" stroke="#333" stroke-width="6"/><path d="${p.edge}" stroke="#f0d435" stroke-width="4.600"/><path d="M41.800 51V66M57 94.300H71M98 118H108M85 100V110M126 82V92" stroke="#999" stroke-width="6.200"/><path d="M41.800 51V66M57 94.300H71M98 118H108M85 100V110M126 82V92" stroke="#fff" stroke-width="4"/>`
    : path('base', p.base) + path('glass', p.base);
  return `<svg class="card__plan plan" viewBox="0 0 160 160">
    ${path('furniture', p.furn)}
    ${p.fill.map(([x, y, w, h, c]) => `<rect x="${x}" y="${y}" width="${w}" height="${h}" fill="${c}"/>`).join('')}
    <path d="${steps.join('')}" stroke="#000" stroke-opacity=".22" stroke-width=".6"/>
    <path d="${p.over || ''}" stroke="#c9a5b6" stroke-width=".6"/>
    ${path('thin', p.thin)}${path('dash', p.dash)}${baseEdge}${path('wall', p.wall)}${path('inner', p.inner)}${path('red', p.mark)}
    ${(p.posts || []).map(x => `<rect x="${x}" y="101" width="1.200" height="2" fill="#888"/>`).join('')}
    ${p.notes.map(note).join('')}
    ${p.dims.map(([x, y, t, r]) => `<text x="${x}" y="${y}" text-anchor="middle"${r ? ` transform="rotate(-90 ${x} ${y})"` : ''}>${t}</text>`).join('')}
    <text class="plan__title" x="3.500" y="8">Schematic Plan</text>
    <text class="plan__title" x="3.500" y="16.500">1<tspan font-size="4" dy="-2">st</tspan><tspan dy="2"> floor</tspan></text>
    <text class="plan__total" x="${p.total[0]}" y="${p.total[1]}" text-anchor="end">${p.total[2]}</text>
    <text class="plan__total" x="${p.total[0]}" y="${p.total[1] + 6}" text-anchor="end">${p.total[3]}</text>
  </svg>`;
}

// complex, price, rooms, area, code, floor, floors, plan
const FLATS = [
  ['Генеральский', 1872000, 1, 39, 'ГЕН-112', 8, 12, 'veranda'],
  ['Речной', 2688000, 2, 42, 'РЕЧ-05', 12, 12, 'bay'],
  ['Лесной', 4680000, 3, 65, 'ЛЕС-09', 2, 16, 'square'],
  ['Генеральский', 5304000, 5, 102, 'ГЕН-82', 1, 18, 'veranda'],
  ['Квантум', 3680000, 3, 80, 'КВ-967', 12, 12, 'studio'],
  ['Генеральский', 5688000, 3, 72, 'ГЕН-34', 10, 12, 'yellow'],
  ['Речной', 8610000, 4, 105, 'РЕЧ-250', 8, 8, 'terrace'],
  ['Квантум', 2090000, 1, 38, 'КВ138', 18, 22, 'tall'],
  ['Лесной', 6936000, 2, 68, 'ЛЕС-435', 16, 18, 'cottage'],
  ['Генеральский', 5244000, 3, 57, 'ГЕН-12', 1, 14, 'family'],
  ['Квантум', 4047000, 3, 71, 'КВ-947', 1, 12, 'compact'],
  ['Лесной', 6256000, 4, 92, 'ЛЕС-763', 5, 22, 'pink'],
  ['Генеральский', 7488000, 5, 104, 'ГЕН-462', 4, 18, 'long'],
  ['Речной', 6240000, 5, 120, 'РЕЧ-412', 8, 8, 'ranch'],
  ['Лесной', 2208000, 1, 48, 'ЛЕС-654', 12, 16, 'chalet'],
  ['Генеральский', 4424000, 2, 56, 'ГЕН-792', 6, 14, 'cabin'],
  ['Лесной', 3456000, 3, 72, 'ЛЕС-158', 7, 12, 'chalet'],
  ['Речной', 6272000, 4, 98, 'РЕЧ-872', 2, 20, 'ranch']
];

const HEART = 'M12 21 2 11.300C-1 8 -.4 3.400 2.200 1.400 5.400-1 9.700-.2 12 3.400 14.300-.2 18.600-1 21.800 1.400 24.400 3.400 25 8 22 11.300Z';

document.getElementById('cards').innerHTML = FLATS.map(([name, price, rooms, area, code, floor, floors, key]) => `
  <article class="card">
    <div class="card__header"><div class="card__title">ЖК ${name}</div><svg class="card__heart" viewBox="0 0 24 21"><path d="${HEART}"/></svg></div>
    ${plan(PLANS[key])}
    <div class="card__info">
      <div><div class="card__price">${price} ₽</div><div class="card__rate">undefined ₽/м2</div></div>
      <div class="card__stats">
        <div class="card__stat">Комнат<div class="card__number">${rooms}</div></div>
        <div class="card__stat">Площадь<div class="card__number">${area}</div></div>
      </div>
    </div>
    <div class="card__footer"><span>${code}</span><span>Этаж ${floor} из ${floors}</span></div>
  </article>`).join('');
```
